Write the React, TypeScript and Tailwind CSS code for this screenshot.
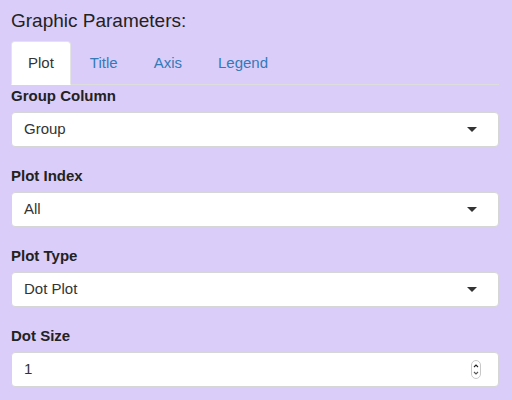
import { useState } from "react";

const tabs = ["Plot", "Title", "Axis", "Legend"];

function SelectBox({ value }: { value: string }) {
  return (
    <div className="flex h-[35px] w-[488px] items-center justify-between rounded-[4px] border border-[#d6d6d6] bg-white pl-[12px] pr-[21px] text-[15px] text-[#333]">
      <span>{value}</span>
      <span className="h-0 w-0 border-x-[5px] border-t-[5px] border-x-transparent border-t-[#333]" />
    </div>
  );
}

function NumberBox({ value }: { value: string }) {
  return (
    <div className="flex h-[35px] w-[488px] items-center justify-between rounded-[4px] border border-[#d6d6d6] bg-white pl-[12px] pr-[17px] text-[15px] text-[#333]">
      <span>{value}</span>
      {/* spinner */}
      <svg width="10" height="19" viewBox="0 0 10 19">
        <rect x="0.5" y="0.5" width="9" height="18" rx="4.5" fill="white" stroke="#c8c8c8" />
        <path d="M3 7 L5 5 L7 7" fill="none" stroke="#222" strokeWidth="1.1" />
        <path d="M3 12 L5 14 L7 12" fill="none" stroke="#555" strokeWidth="1.1" />
      </svg>
    </div>
  );
}

function Field({ label, children }: { label: string; children: React.ReactNode }) {
  return (
    <div className="mb-[19px]">
      <div className="mb-[6px] h-[20px] text-[15px] leading-[20px] font-bold text-[#222]">{label}</div>
      {children}
    </div>
  );
}

export default function App() {
  const [active, setActive] = useState("Plot");

  return (
    <div
      className="min-h-[400px] w-[512px] bg-[#dacdf9] pl-[11px]"
      style={{ fontFamily: '"Liberation Sans", Arial, sans-serif' }}
    >
      <h4 className="pt-[10px] text-[19px] leading-[21px] text-[#222]">Graphic Parameters:</h4>

      {/* Tabs */}
      <div className="mt-[10px] flex w-[488px] border-b border-[#ddd]">
        {tabs.map((t) => (
          <button
            key={t}
            onClick={() => setActive(t)}
            className={`-mb-px mr-[2px] flex h-[44px] items-center rounded-t-[4px] border px-[16px] text-[15px] ${
              active === t
                ? "border-[#e4e4e4] border-b-transparent bg-white text-[#333]"
                : "border-transparent text-[#337ab7]"
            }`}
          >
            {t}
          </button>
        ))}
      </div>

      <div className="pt-[1px]">
        <Field label="Group Column">
          <SelectBox value="Group" />
        </Field>
        <Field label="Plot Index">
          <SelectBox value="All" />
        </Field>
        <Field label="Plot Type">
          <SelectBox value="Dot Plot" />
        </Field>
        <Field label="Dot Size">
          <NumberBox value="1" />
        </Field>
      </div>
    </div>
  );
}
